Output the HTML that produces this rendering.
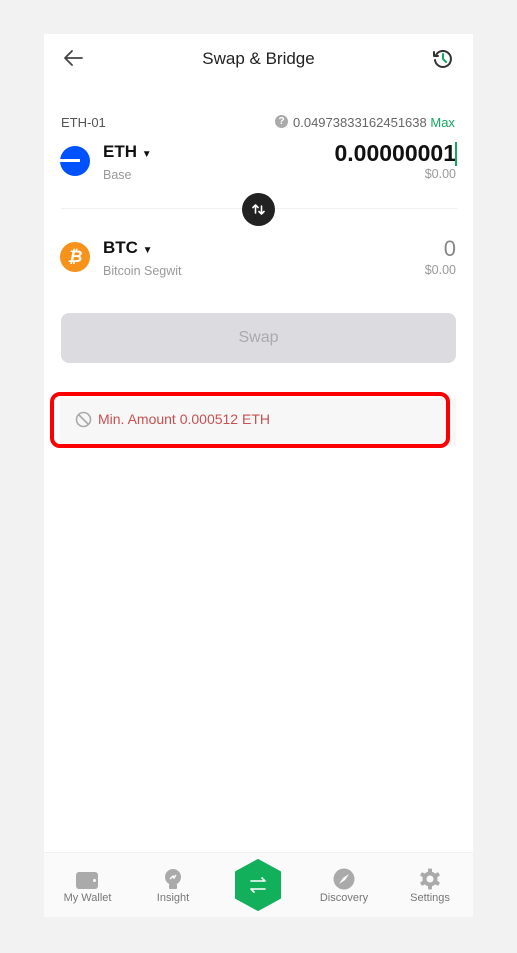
<!DOCTYPE html>
<html><head><meta charset="utf-8"><style>
*{margin:0;padding:0;box-sizing:border-box}
body{width:517px;height:953px;background:#f2f2f2;font-family:"Liberation Sans",sans-serif;position:relative;overflow:hidden}
#app{position:absolute;left:44px;top:34px;width:429px;height:883px;background:#fff}
.a{position:absolute;white-space:nowrap}
</style></head><body>
<div id="app">
<svg class="a" style="left:18px;top:14px" width="22" height="20" viewBox="0 0 22 20"><path d="M20 10H3M10 3L3 10L10 17" fill="none" stroke="#444" stroke-width="1.8" stroke-linecap="round" stroke-linejoin="round"/></svg>
<div class="a" style="left:0;width:429px;top:15px;text-align:center;font-size:17px;color:#222">Swap &amp; Bridge</div>
<svg class="a" style="left:388px;top:14px" width="22" height="22" viewBox="0 0 22 22"><path d="M4 7A8 8 0 1 1 3 12" fill="none" stroke="#333" stroke-width="2" stroke-linecap="round"/><path d="M2 4v4h4" fill="none" stroke="#333" stroke-width="2" stroke-linecap="round" stroke-linejoin="round"/><path d="M11 6v5l3 3" fill="none" stroke="#13a85f" stroke-width="2" stroke-linecap="round"/></svg>

<div class="a" style="left:17px;top:81px;font-size:13px;color:#555">ETH-01</div>
<div class="a" style="left:231px;top:81px;width:13px;height:13px;border-radius:50%;background:#aaa;color:#fff;font-size:10px;text-align:center;line-height:13px;font-weight:bold">?</div>
<div class="a" style="left:249px;top:81px;font-size:13px;color:#666">0.04973833162451638 <span style="color:#13a85f">Max</span></div>

<div class="a" style="left:16px;top:112px;width:30px;height:30px;border-radius:50%;background:#0052ff"><div style="position:absolute;left:0;top:13px;width:20px;height:3px;background:#fff"></div></div>
<div class="a" style="left:59px;top:108px;font-size:17px;font-weight:bold;color:#111">ETH <span style="font-size:10px">&#9660;</span></div>
<div class="a" style="left:59px;top:134px;font-size:12.5px;color:#999">Base</div>
<div class="a" style="right:17px;top:106px;font-size:23px;font-weight:bold;color:#111">0.00000001</div>
<div class="a" style="left:411px;top:108px;width:1.5px;height:24px;background:#13a85f"></div>
<div class="a" style="right:17px;top:133px;font-size:12.5px;color:#999">$0.00</div>

<div class="a" style="left:17px;top:174px;width:396px;height:1px;background:#f0f0f0"></div>
<div class="a" style="left:198px;top:159px;width:33px;height:33px;border-radius:50%;background:#222">
<svg width="33" height="33" viewBox="0 0 33 33"><path d="M13.5 20V12M11 14.5l2.5-2.5 2.5 2.5M19.5 13v8M17 18.5l2.5 2.5 2.5-2.5" fill="none" stroke="#fff" stroke-width="1.6" stroke-linecap="round" stroke-linejoin="round"/></svg></div>

<div class="a" style="left:16px;top:208px;width:30px;height:30px;border-radius:50%;background:#f7931a;color:#fff;font-size:17px;font-weight:bold;text-align:center;line-height:30px;font-style:italic">&#8383;</div>
<div class="a" style="left:59px;top:204px;font-size:17px;font-weight:bold;color:#111">BTC <span style="font-size:10px">&#9660;</span></div>
<div class="a" style="left:59px;top:230px;font-size:12.5px;color:#999">Bitcoin Segwit</div>
<div class="a" style="right:17px;top:202px;font-size:22px;color:#888">0</div>
<div class="a" style="right:17px;top:229px;font-size:12.5px;color:#999">$0.00</div>

<div class="a" style="left:17px;top:279px;width:395px;height:50px;border-radius:8px;background:#dcdce0;text-align:center;line-height:50px;font-size:16px;color:#aaa">Swap</div>

<div class="a" style="left:16px;top:364px;width:396px;height:48px;background:#f7f7f7"></div>
<div class="a" style="left:6px;top:358px;width:400px;height:56px;border:4px solid #f00;border-radius:10px"></div>
<svg class="a" style="left:31px;top:377px" width="17" height="17" viewBox="0 0 17 17"><circle cx="8.5" cy="8.5" r="7" fill="none" stroke="#aaa" stroke-width="1.6"/><path d="M3.5 3.5l10 10" stroke="#aaa" stroke-width="1.6"/></svg>
<div class="a" style="left:54px;top:377px;font-size:14px;color:#c85050">Min. Amount 0.000512 ETH</div>

<div class="a" style="left:0;top:818px;width:429px;height:65px;background:#fafafa;border-top:1px solid #f0f0f0"></div>
<div class="a" style="left:32px;top:838px;width:22px;height:17px;border-radius:3px;background:#aaa"><div style="position:absolute;right:2px;top:7px;width:3px;height:3px;border-radius:50%;background:#fff"></div></div>
<div class="a" style="left:0;width:87px;top:858px;text-align:center;font-size:11px;color:#777">My Wallet</div>
<svg class="a" style="left:119px;top:834px" width="20" height="24" viewBox="0 0 20 24"><circle cx="10" cy="9" r="8" fill="#aaa"/><rect x="6" y="16" width="8" height="5" rx="1" fill="#aaa"/><path d="M7 11l3-3 1 2 2-3" fill="none" stroke="#fff" stroke-width="1.4"/></svg>
<div class="a" style="left:86px;width:86px;top:858px;text-align:center;font-size:11px;color:#777">Insight</div>
<svg class="a" style="left:190px;top:825px" width="48" height="52" viewBox="0 0 48 52"><path d="M24 1L46 13V39L24 51L2 39V13Z" fill="#13b05c" stroke="#13b05c" stroke-width="2" stroke-linejoin="round"/><path d="M17 22h14M28 19l3 3M31 30H17M20 33l-3-3" fill="none" stroke="#fff" stroke-width="1.6" stroke-linecap="round"/></svg>
<svg class="a" style="left:289px;top:834px" width="22" height="22" viewBox="0 0 22 22"><circle cx="11" cy="11" r="10.5" fill="#aaa"/><path d="M16 6L10 10 6 16 12 12Z" fill="#fff"/></svg>
<div class="a" style="left:257px;width:86px;top:858px;text-align:center;font-size:11px;color:#777">Discovery</div>
<svg class="a" style="left:375px;top:834px" width="22" height="22" viewBox="0 0 22 22"><g fill="#aaa"><circle cx="11" cy="11" r="7.5"/><rect x="9" y="0.5" width="4" height="21" rx="1"/><rect x="9" y="0.5" width="4" height="21" rx="1" transform="rotate(60 11 11)"/><rect x="9" y="0.5" width="4" height="21" rx="1" transform="rotate(120 11 11)"/></g><circle cx="11" cy="11" r="3.5" fill="#fafafa"/></svg>
<div class="a" style="left:343px;width:86px;top:858px;text-align:center;font-size:11px;color:#777">Settings</div>
</div>
</body></html>
